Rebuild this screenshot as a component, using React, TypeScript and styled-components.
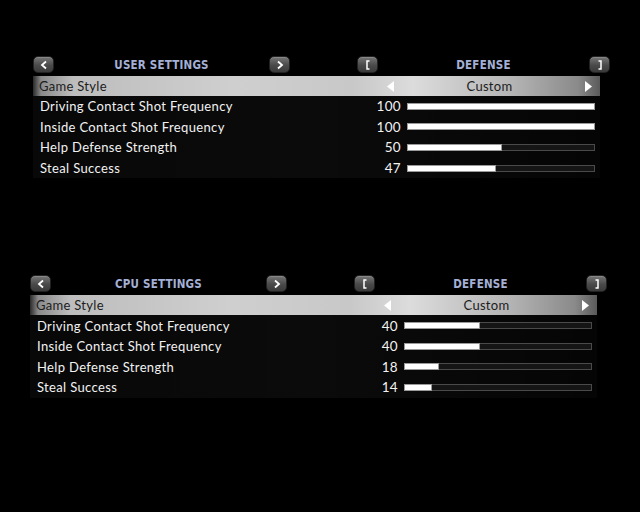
import React from "react";
import styled, { createGlobalStyle } from "styled-components";

const GlobalStyle = createGlobalStyle`
  html, body {
    margin: 0;
    padding: 0;
    background: #000;
  }
  body {
    width: 640px;
    height: 512px;
    overflow: hidden;
    font-family: Lato, "Open Sans", sans-serif;
  }
`;

const Screen = styled.div`
  width: 640px;
  height: 512px;
  background: #000;
  padding-top: 56px;
  box-sizing: border-box;
`;

const Panel = styled.section<{ $left: number; $gapTop: number }>`
  margin-left: ${(p) => p.$left}px;
  margin-top: ${(p) => p.$gapTop}px;
  width: 578px;
`;

const Header = styled.div`
  display: flex;
  height: 17px;
  margin-bottom: 3px;
`;

const HeaderGroup = styled.div<{ $width: number }>`
  display: flex;
  align-items: center;
  width: ${(p) => p.$width}px;
`;

const HeaderSpacer = styled.div`
  width: 67px;
`;

const NavButton = styled.div`
  width: 21px;
  height: 17px;
  box-sizing: border-box;
  border-radius: 5px;
  border: 1px solid #222;
  background: linear-gradient(#767676, #4a4a4a 55%, #3a3a3a);
  box-shadow: inset 0 1px 0 rgba(255, 255, 255, 0.15);
  display: flex;
  align-items: center;
  justify-content: center;
  flex-shrink: 0;
`;

const Title = styled.div`
  flex: 1;
  text-align: center;
  font-family: "DejaVu Sans Condensed", "DejaVu Sans", sans-serif;
  font-weight: bold;
  font-size: 11.5px;
  letter-spacing: 0.2px;
  color: #a4b0d6;
`;

const Selected = styled.div`
  width: 567px;
  height: 20px;
  display: grid;
  grid-template-columns: 1fr 213px;
  align-items: center;
  background: linear-gradient(
    90deg,
    #2a2a2a 0px,
    #8a8a8a 8px,
    #bdbdbd 40px,
    #cfcfcf 200px,
    #c8c8c8 320px,
    #dcdcdc 380px,
    #b4b4b4 480px,
    #8a8a8a 545px,
    #5a5a5a 567px
  );
  color: #1c1c1c;
  font-size: 13px;
  letter-spacing: 0.3px;
`;

const SelectedLabel = styled.div`
  padding-left: 6px;
`;

const Picker = styled.div`
  display: flex;
  align-items: center;
  justify-content: space-between;
  padding-right: 8px;
`;

const PickerValue = styled.span`
  flex: 1;
  text-align: center;
`;

const Rows = styled.div`
  width: 567px;
  background: linear-gradient(
    90deg,
    rgba(255, 255, 255, 0.03),
    rgba(255, 255, 255, 0.045) 50%,
    rgba(255, 255, 255, 0.02)
  );
`;

const Row = styled.div`
  height: 20.6px;
  display: grid;
  grid-template-columns: 1fr 40px 188px;
  column-gap: 6px;
  align-items: center;
  color: #f2f2f2;
  font-size: 13px;
  letter-spacing: 0.35px;
  padding-right: 5px;
`;

const Label = styled.div`
  padding-left: 7px;
`;

const Value = styled.div`
  text-align: right;
  font-size: 13.5px;
`;

const Track = styled.div`
  height: 7px;
  box-sizing: border-box;
  border: 1px solid #4a4a4a;
  background: #151515;
`;

const Fill = styled.div`
  height: 100%;
  background: #fff;
  box-shadow: 0 0 0 1px #9a9a9a;
`;

const Chevron = ({ dir }: { dir: "l" | "r" }) => (
  <svg width="10" height="10" viewBox="0 0 10 10">
    <path
      d={dir === "l" ? "M7 1.5 L3 5 L7 8.5" : "M3 1.5 L7 5 L3 8.5"}
      fill="none"
      stroke="#fff"
      strokeWidth="1.8"
    />
  </svg>
);

const Bracket = ({ dir }: { dir: "l" | "r" }) => (
  <svg width="8" height="10" viewBox="0 0 8 10">
    <path
      d={dir === "l" ? "M5.5 1 H3 V9 H5.5" : "M2.5 1 H5 V9 H2.5"}
      fill="none"
      stroke="#fff"
      strokeWidth="1.5"
    />
  </svg>
);

const Arrow = ({ dir }: { dir: "l" | "r" }) => (
  <svg width="7" height="11" viewBox="0 0 7 11">
    <path d={dir === "l" ? "M7 0 L0 5.5 L7 11 Z" : "M0 0 L7 5.5 L0 11 Z"} fill="#fff" />
  </svg>
);

type Setting = { label: string; value: number };

type PanelProps = {
  title: string;
  left: number;
  gapTop: number;
  settings: Setting[];
};

const SettingsPanel = ({ title, left, gapTop, settings }: PanelProps) => (
  <Panel $left={left} $gapTop={gapTop}>
    <Header>
      <HeaderGroup $width={257}>
        <NavButton>
          <Chevron dir="l" />
        </NavButton>
        <Title>{title}</Title>
        <NavButton>
          <Chevron dir="r" />
        </NavButton>
      </HeaderGroup>
      <HeaderSpacer />
      <HeaderGroup $width={253}>
        <NavButton>
          <Bracket dir="l" />
        </NavButton>
        <Title>DEFENSE</Title>
        <NavButton>
          <Bracket dir="r" />
        </NavButton>
      </HeaderGroup>
    </Header>
    <Selected>
      <SelectedLabel>Game Style</SelectedLabel>
      <Picker>
        <Arrow dir="l" />
        <PickerValue>Custom</PickerValue>
        <Arrow dir="r" />
      </Picker>
    </Selected>
    <Rows>
      {settings.map((s) => (
        <Row key={s.label}>
          <Label>{s.label}</Label>
          <Value>{s.value}</Value>
          <Track>
            <Fill style={{ width: `${s.value}%` }} />
          </Track>
        </Row>
      ))}
    </Rows>
  </Panel>
);

const userSettings: Setting[] = [
  { label: "Driving Contact Shot Frequency", value: 100 },
  { label: "Inside Contact Shot Frequency", value: 100 },
  { label: "Help Defense Strength", value: 50 },
  { label: "Steal Success", value: 47 },
];

const cpuSettings: Setting[] = [
  { label: "Driving Contact Shot Frequency", value: 40 },
  { label: "Inside Contact Shot Frequency", value: 40 },
  { label: "Help Defense Strength", value: 18 },
  { label: "Steal Success", value: 14 },
];

export default function App() {
  return (
    <>
      <GlobalStyle />
      <Screen>
        <SettingsPanel title="USER SETTINGS" left={33} gapTop={0} settings={userSettings} />
        <SettingsPanel title="CPU SETTINGS" left={30} gapTop={97} settings={cpuSettings} />
      </Screen>
    </>
  );
}
